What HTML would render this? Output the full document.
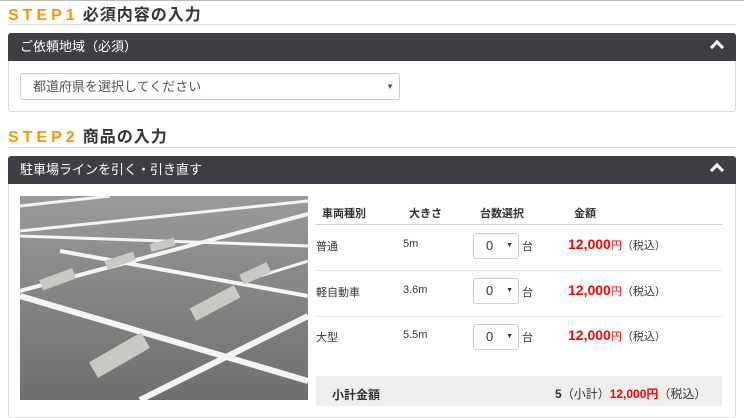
<!DOCTYPE html><html><head><meta charset="utf-8"><style>
body{margin:0;width:744px;height:400px;overflow:hidden;background:#fff;font-family:"Liberation Sans","Noto Sans CJK JP",sans-serif;color:#333;position:relative}
.a{position:absolute}
.step{font-size:16px;font-weight:bold;letter-spacing:1px}
.step b{color:#f39800;letter-spacing:4px;margin-right:4px}
.hr{height:1px;background:#ddd;left:8px;width:728px}
.card{left:8px;width:726px;border:1px solid #ddd;border-radius:3px}
.hd{left:8px;width:728px;height:28px;background:#3e3f44;color:#fff;font-size:13px;line-height:28px;text-indent:12px;border-radius:3px 3px 0 0}
.car{position:absolute;right:14px;top:9px;width:7px;height:7px;border-left:3px solid #fff;border-top:3px solid #fff;transform:rotate(45deg);text-indent:0}
.sel{border:1px solid #ccc;border-radius:3px;background:#fff}
.t{font-size:11px}
.red{color:#f00;font-weight:bold;font-size:14px}
</style></head><body>
<div class="a" style="left:0;top:0;width:744px;height:1px;background:#bbb"></div>
<div class="a step" style="left:8px;top:1px"><b>STEP1</b>必須内容の入力</div>
<div class="a hr" style="top:24px"></div>
<div class="a card" style="top:33px;height:77px"></div>
<div class="a hd" style="top:33px">ご依頼地域（必須）<span class="car"></span></div>
<div class="a sel" style="left:20px;top:73px;width:378px;height:25px;font-size:13px;line-height:25px;color:#555;text-indent:12px">都道府県を選択してください<span style="position:absolute;right:5px;font-size:8px">▼</span></div>
<div class="a step" style="left:8px;top:123px"><b>STEP2</b>商品の入力</div>
<div class="a hr" style="top:147px"></div>
<div class="a card" style="top:156px;height:260px"></div>
<div class="a hd" style="top:156px">駐車場ラインを引く・引き直す<span class="car"></span></div>
<svg class="a" style="left:20px;top:196px" width="288" height="204" viewBox="0 0 288 204">
<defs><linearGradient id="g" x1="0" y1="0" x2="0" y2="1"><stop offset="0" stop-color="#9a9a9a"/><stop offset="1" stop-color="#6e6e6e"/></linearGradient></defs>
<rect width="288" height="204" fill="url(#g)"/>
<g stroke="#f4f4f4" fill="none">
<path d="M0 10 L90 0" stroke-width="3"/><path d="M0 35 L288 5" stroke-width="3"/>
<path d="M0 95 L288 18" stroke-width="4"/><path d="M0 40 L288 50" stroke-width="3"/>
<path d="M40 55 L288 100" stroke-width="4"/><path d="M0 100 L288 185" stroke-width="6"/>
<path d="M120 204 L288 120" stroke-width="6"/><path d="M240 80 L288 65" stroke-width="3"/>
</g>
<g fill="#c9c9c4"><rect x="70" y="150" width="60" height="18" transform="rotate(-30 100 160)"/><rect x="170" y="100" width="50" height="14" transform="rotate(-28 195 107)"/><rect x="220" y="72" width="30" height="11" transform="rotate(-25 235 77)"/><rect x="20" y="78" width="35" height="11" transform="rotate(-20 37 83)"/><rect x="85" y="60" width="30" height="9" transform="rotate(-18 100 64)"/><rect x="130" y="45" width="25" height="8" transform="rotate(-15 142 49)"/></g>
</svg>
<div class="a t" style="left:322px;top:205px;font-weight:bold">車両種別</div>
<div class="a t" style="left:409px;top:205px;font-weight:bold">大きさ</div>
<div class="a t" style="left:480px;top:205px;font-weight:bold">台数選択</div>
<div class="a t" style="left:574px;top:205px;font-weight:bold">金額</div>
<div class="a" style="left:316px;top:224px;width:406px;height:1px;background:#ccc"></div>
<div class="a" style="left:316px;top:270px;width:406px;height:1px;background:#e3e3e3"></div>
<div class="a" style="left:316px;top:316px;width:406px;height:1px;background:#e3e3e3"></div>
<div class="a t" style="left:316px;top:238px">普通</div><div class="a t" style="left:403px;top:238px">5m</div>
<div class="a t" style="left:316px;top:284px">軽自動車</div><div class="a t" style="left:403px;top:284px">3.6m</div>
<div class="a t" style="left:316px;top:329px">大型</div><div class="a t" style="left:403px;top:329px">5.5m</div>
<div class="a sel" style="left:473px;top:233px;width:44px;height:24px;font-size:13px;line-height:24px;text-indent:12px">0<span style="position:absolute;right:5px;font-size:7px">▼</span></div>
<div class="a sel" style="left:473px;top:278px;width:44px;height:24px;font-size:13px;line-height:24px;text-indent:12px">0<span style="position:absolute;right:5px;font-size:7px">▼</span></div>
<div class="a sel" style="left:473px;top:324px;width:44px;height:24px;font-size:13px;line-height:24px;text-indent:12px">0<span style="position:absolute;right:5px;font-size:7px">▼</span></div>
<div class="a t" style="left:522px;top:238px">台</div><div class="a t" style="left:522px;top:284px">台</div><div class="a t" style="left:522px;top:329px">台</div>
<div class="a" style="left:568px;top:236px"><span class="red">12,000</span><span style="color:#f00;font-size:11px">円</span><span class="t">（税込）</span></div>
<div class="a" style="left:568px;top:282px"><span class="red">12,000</span><span style="color:#f00;font-size:11px">円</span><span class="t">（税込）</span></div>
<div class="a" style="left:568px;top:327px"><span class="red">12,000</span><span style="color:#f00;font-size:11px">円</span><span class="t">（税込）</span></div>
<div class="a" style="left:316px;top:376px;width:406px;height:30px;background:#eee"></div>
<div class="a" style="left:332px;top:386px;font-size:12px;font-weight:bold">小計金額</div>
<div class="a" style="left:555px;top:385px;font-size:12px"><b>5</b>（小計）<b style="color:#f00">12,000円</b>（税込）</div>
</body></html>
